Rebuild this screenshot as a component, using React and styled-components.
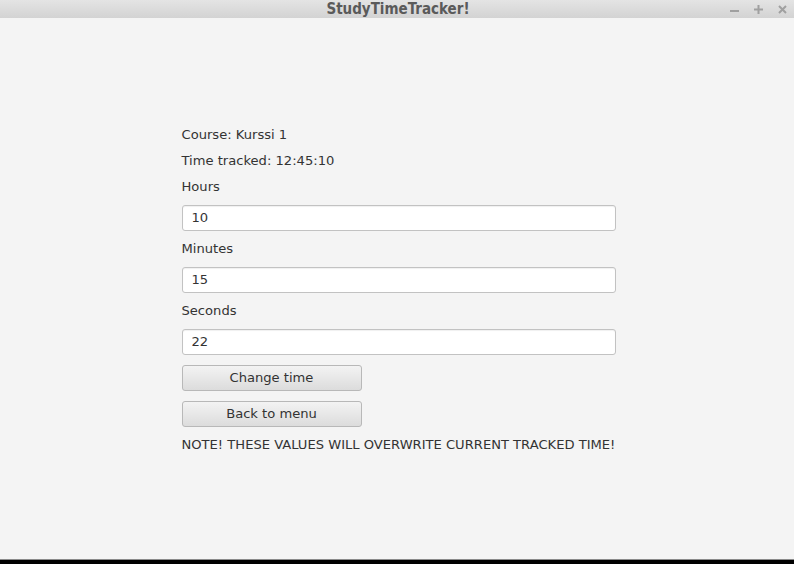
import React from 'react'
import styled, { createGlobalStyle } from 'styled-components'

const GlobalStyle = createGlobalStyle`
  html, body {
    margin: 0;
    padding: 0;
    background: #000;
  }
  * {
    box-sizing: border-box;
  }
`

const Window = styled.div`
  width: 794px;
  height: 564px;
  display: flex;
  flex-direction: column;
  font-family: "DejaVu Sans", Verdana, sans-serif;
  font-size: 13.1px;
  color: #333;
  background: #000;
`

const TitleBar = styled.div`
  height: 18px;
  flex: none;
  display: flex;
  align-items: center;
  justify-content: center;
  position: relative;
  background: linear-gradient(#e4e4e4, #d3d3d3);
`

const Title = styled.div`
  font-family: "DejaVu Sans Condensed", "DejaVu Sans", sans-serif;
  font-stretch: condensed;
  font-weight: bold;
  font-size: 15px;
  color: #5a5a5a;
  margin-left: 2px;
`

const Controls = styled.div`
  position: absolute;
  right: 5px;
  top: 0;
  height: 18px;
  display: flex;
  align-items: center;
  gap: 10px;
`

const Ctrl = styled.span`
  width: 14px;
  display: flex;
  justify-content: center;
`

const Content = styled.div`
  flex: 1;
  background: #f4f4f4;
  display: flex;
  align-items: center;
  justify-content: center;
  border-bottom: 1px solid #8a8a8a;
  padding-left: 3px;
`

const Form = styled.div`
  width: 434px;
  display: flex;
  flex-direction: column;
  align-items: flex-start;
  gap: 10px;
  margin-top: 2px;
`

const Label = styled.div`
  height: 16px;
  line-height: 16px;
  white-space: nowrap;
`

const Field = styled.input`
  width: 434px;
  height: 26px;
  border: 1px solid #c2c2c2;
  border-radius: 3px;
  background: #fff;
  padding: 0 9px;
  font-family: inherit;
  font-size: inherit;
  color: #333;
  outline: none;
  box-shadow: inset 0 1px 1px #f0f0f0;
`

const Button = styled.button`
  width: 180px;
  height: 26px;
  border: 1px solid #b8b8b8;
  border-radius: 3px;
  background: linear-gradient(#f3f3f3, #dcdcdc);
  font-family: inherit;
  font-size: inherit;
  color: #333;
  padding: 0;
`

const BottomStrip = styled.div`
  height: 4px;
  flex: none;
  background: #000;
`

const fields = [
  { label: 'Hours', value: '10' },
  { label: 'Minutes', value: '15' },
  { label: 'Seconds', value: '22' },
]

export default function App() {
  return (
    <>
      <GlobalStyle />
      <Window>
        <TitleBar>
          <Title>StudyTimeTracker!</Title>
          <Controls>
            <Ctrl>
              <svg width="9" height="9" viewBox="0 0 9 9">
                <rect x="0" y="5" width="9" height="2" fill="#a0a0a0" />
              </svg>
            </Ctrl>
            <Ctrl>
              <svg width="9" height="9" viewBox="0 0 9 9">
                <rect x="0" y="3.5" width="9" height="2" fill="#a0a0a0" />
                <rect x="3.5" y="0" width="2" height="9" fill="#a0a0a0" />
              </svg>
            </Ctrl>
            <Ctrl>
              <svg width="9" height="9" viewBox="0 0 9 9">
                <path d="M1 1 L8 8 M8 1 L1 8" stroke="#a0a0a0" strokeWidth="2" />
              </svg>
            </Ctrl>
          </Controls>
        </TitleBar>
        <Content>
          <Form>
            <Label>Course: Kurssi 1</Label>
            <Label>Time tracked: 12:45:10</Label>
            {fields.map(f => (
              <React.Fragment key={f.label}>
                <Label>{f.label}</Label>
                <Field defaultValue={f.value} />
              </React.Fragment>
            ))}
            <Button>Change time</Button>
            <Button>Back to menu</Button>
            <Label>NOTE! THESE VALUES WILL OVERWRITE CURRENT TRACKED TIME!</Label>
          </Form>
        </Content>
        <BottomStrip />
      </Window>
    </>
  )
}
